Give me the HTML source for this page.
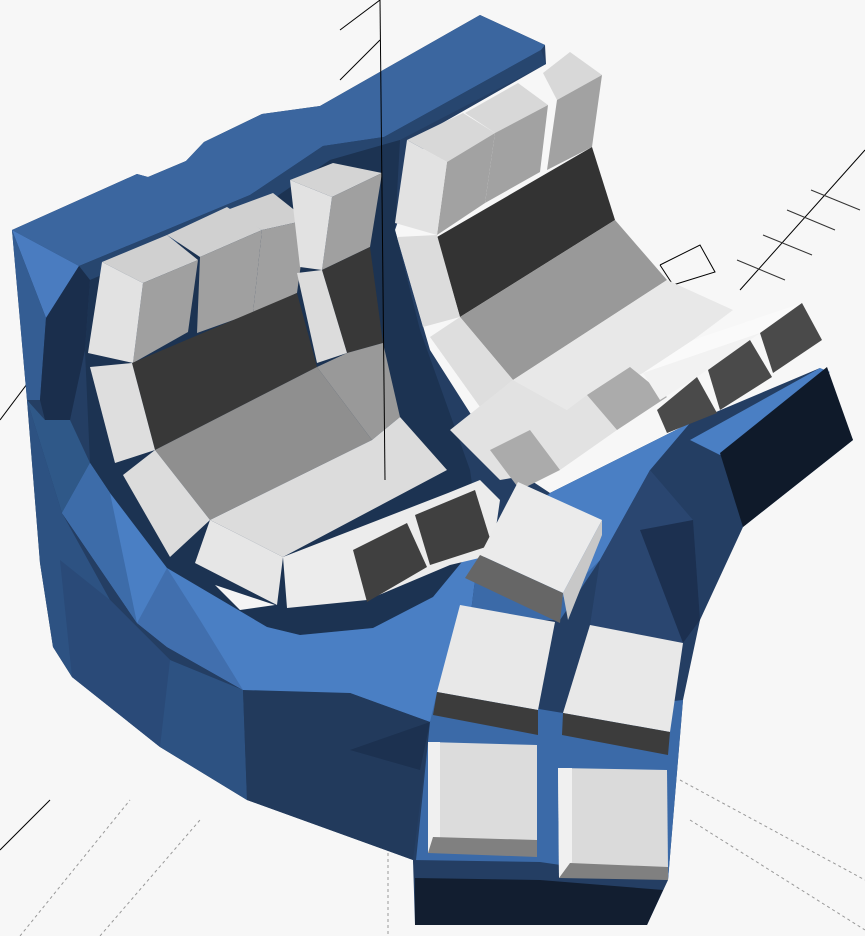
<!DOCTYPE html>
<html><head><meta charset="utf-8"><style>
html,body{margin:0;padding:0;background:#f7f7f7;width:865px;height:936px;overflow:hidden}
svg{display:block}
</style></head><body>
<svg width="865" height="936" viewBox="0 0 865 936" xmlns="http://www.w3.org/2000/svg">
<g stroke="#000" stroke-width="1" fill="none">
<line x1="340" y1="80" x2="380" y2="40"/>
<line x1="340" y1="30" x2="380" y2="0"/>
<line x1="740" y1="290" x2="865" y2="150"/>
<polyline points="660,265 700,245 715,272 673,285 660,265"/>
<line x1="0" y1="850" x2="50" y2="800"/>
<line x1="0" y1="420" x2="30" y2="380"/>
</g>
<g stroke="#333" stroke-width="1" fill="none">
<line x1="787" y1="210" x2="835" y2="230"/>
<line x1="811" y1="190" x2="860" y2="210"/>
<line x1="763" y1="235" x2="812" y2="255"/>
<line x1="737" y1="260" x2="785" y2="280"/>
</g>
<g stroke="#999" stroke-width="1" stroke-dasharray="3,3" fill="none">
<line x1="20" y1="936" x2="130" y2="800"/>
<line x1="100" y1="936" x2="200" y2="820"/>
<line x1="680" y1="780" x2="865" y2="880"/>
<line x1="690" y1="820" x2="865" y2="930"/>
<line x1="388" y1="853" x2="388" y2="936"/>
</g>
<!-- main body base (dark wall) -->
<polygon fill="#243e63" points="12,230 137,174 148,177 186,161 204,142 262,114 320,106 480,15 545,45 546,64 430,130 395,230 430,350 500,460 550,493 690,423 820,368 853,440 743,527 700,620 683,700 668,880 647,925 415,925 413,860 247,800 160,747 72,677 53,647 40,563 27,400"/>
<!-- outer left side -->
<polygon fill="#2d5282" points="27,400 62,513 110,600 170,660 243,690 247,800 160,747 72,677 53,647 40,563"/>
<polygon fill="#2a4a78" points="60,560 110,600 170,660 160,747 72,677"/>
<!-- top wall face -->
<polygon fill="#3b669f" points="12,230 137,174 148,177 186,161 204,142 262,114 320,106 480,15 545,45 541,50 384,137 323,146 250,195 79,266"/>
<polygon fill="#27466f" points="79,266 250,195 323,146 384,137 541,50 546,64 400,140 330,160 260,208 90,280"/>
<polygon fill="#4a7cc0" points="12,230 79,266 46,318"/>
<polygon fill="#345d93" points="12,230 46,318 40,400 27,400"/>
<polygon fill="#1a2e4c" points="46,318 79,266 90,280 85,350 70,420 45,420 40,400"/>
<polygon fill="#2f5888" points="27,400 45,420 70,420 90,463 62,513"/>
<!-- bowl interior -->
<polygon fill="#1c3352" points="90,280 260,208 330,160 400,140 395,230 420,330 470,470 480,540 433,597 373,628 300,635 267,627 167,568 110,493 90,463 85,350"/>
<!-- front rim top face -->
<polygon fill="#4a7fc4" points="62,513 90,463 110,493 167,568 267,627 300,635 373,628 433,597 480,540 470,620 430,722 350,693 273,697 243,690 167,647 137,623"/>
<polygon fill="#3d6ca9" points="62,513 90,463 110,493 137,623"/>
<polygon fill="#416fae" points="167,568 137,623 167,647 243,690 200,620"/>
<!-- lower front dark wall shading -->
<polygon fill="#223a5c" points="243,690 350,693 430,722 413,860 247,800"/>
<polygon fill="#1c3150" points="350,750 430,722 420,770"/>
<!-- right / thumb body -->
<polygon fill="#3b6aa8" points="480,540 550,493 690,423 650,470 600,560 560,620 470,620"/>
<polygon fill="#4a7fc4" points="550,493 690,423 650,470 600,560 560,600 520,560"/>
<polygon fill="#2a4670" points="600,560 650,470 693,520 700,620 683,643 590,625"/>
<polygon fill="#1c3050" points="640,530 693,520 700,620 683,643"/>
<polygon fill="#4a7fc4" points="690,440 820,368 830,372 720,455"/>
<polygon fill="#0f1a2a" points="720,453 827,367 853,440 743,527"/>
<polygon fill="#3b6aa8" points="430,722 437,692 563,713 683,700 668,880 415,870"/>
<polygon fill="#243e63" points="413,860 540,862 663,880 660,890 415,880"/>
<polygon fill="#121e30" points="415,878 540,880 663,890 647,925 415,925"/>
<!-- left cluster -->
<polygon fill="#d0d0d0" points="102,262 167,235 198,260 143,283"/>
<polygon fill="#a0a0a0" points="143,283 198,260 188,332 133,363"/>
<polygon fill="#e2e2e2" points="88,353 102,262 143,283 133,363"/>
<polygon fill="#d0d0d0" points="167,235 227,207 262,230 200,257"/>
<polygon fill="#a0a0a0" points="200,257 262,230 253,313 197,333"/>
<polygon fill="#d0d0d0" points="227,210 273,193 307,220 262,230"/>
<polygon fill="#a0a0a0" points="262,230 307,220 297,293 253,313"/>
<polygon fill="#d4d4d4" points="290,180 333,163 382,173 332,197"/>
<polygon fill="#a0a0a0" points="332,197 382,173 370,247 322,270"/>
<polygon fill="#e2e2e2" points="300,267 290,180 332,197 322,270"/>
<polygon fill="#383838" points="132,363 297,293 317,367 155,450"/>
<polygon fill="#dedede" points="90,367 132,363 155,450 115,463"/>
<polygon fill="#383838" points="322,270 370,247 383,343 347,353"/>
<polygon fill="#dcdcdc" points="297,273 322,270 347,353 317,363"/>
<polygon fill="#8f8f8f" points="155,450 317,367 372,440 210,520"/>
<polygon fill="#dcdcdc" points="123,475 155,450 210,520 170,557"/>
<polygon fill="#999" points="317,367 347,353 383,343 400,417 372,440"/>
<polygon fill="#dcdcdc" points="210,520 372,440 400,417 447,470 283,557"/>
<polygon fill="#e6e6e6" points="195,563 210,520 283,557 277,605"/>
<polygon fill="#ececec" points="283,557 448,493 480,480 500,500 492,555 450,565 367,600 287,608"/>
<polygon fill="#f4f4f4" points="215,585 240,610 275,605"/>
<polygon fill="#404040" points="353,550 407,523 427,567 367,602"/>
<polygon fill="#404040" points="415,515 475,490 492,545 430,565"/>
<!-- right cluster -->
<polygon fill="#d8d8d8" points="543,73 570,52 602,75 557,100"/>
<polygon fill="#a2a2a2" points="557,100 602,75 592,147 547,170"/>
<polygon fill="#d8d8d8" points="465,113 518,83 548,105 495,133"/>
<polygon fill="#a2a2a2" points="495,133 548,105 540,172 485,203"/>
<polygon fill="#d8d8d8" points="407,140 463,113 495,133 447,162"/>
<polygon fill="#a2a2a2" points="447,162 495,133 485,203 437,235"/>
<polygon fill="#e2e2e2" points="395,223 407,140 447,162 437,235"/>
<polygon fill="#333" points="437,237 592,147 615,220 460,317"/>
<polygon fill="#dcdcdc" points="397,237 437,235 460,317 423,327"/>
<polygon fill="#999" points="460,317 615,220 667,280 513,380"/>
<polygon fill="#dedede" points="430,337 460,317 513,380 480,407"/>
<polygon fill="#e8e8e8" points="513,380 667,280 733,310 693,340 643,373 567,410"/>
<polygon fill="#e2e2e2" points="450,430 513,380 567,410 587,395 617,430 560,470 500,480"/>
<polygon fill="#ababab" points="587,395 630,367 667,397 617,430"/>
<polygon fill="#ababab" points="490,450 530,430 560,470 520,490"/>
<polygon fill="#fafafa" points="693,340 802,303 760,333 643,373"/>
<polygon fill="#4a4a4a" points="760,333 802,303 822,340 773,373"/>
<polygon fill="#f2f2f2" points="643,373 760,333 750,340 697,377 660,400"/>
<polygon fill="#4a4a4a" points="708,370 750,340 772,377 720,410"/>
<polygon fill="#4a4a4a" points="657,410 697,377 717,413 667,433"/>
<!-- thumb cluster -->
<polygon fill="#ebebeb" points="518,482 602,520 563,593 480,555"/>
<polygon fill="#c8c8c8" points="602,520 602,535 568,620 563,593"/>
<polygon fill="#666" points="480,555 563,593 560,623 465,578"/>
<polygon fill="#e8e8e8" points="460,605 555,622 538,710 437,692"/>
<polygon fill="#3c3c3c" points="433,715 437,692 538,710 538,735"/>
<polygon fill="#e8e8e8" points="590,625 683,643 670,732 563,713"/>
<polygon fill="#3c3c3c" points="563,713 670,732 668,755 562,735"/>
<polygon fill="#dcdcdc" points="428,742 537,745 537,840 428,853"/>
<polygon fill="#f0f0f0" points="428,742 440,742 440,840 428,853"/>
<polygon fill="#808080" points="428,853 433,837 537,840 537,857"/>
<polygon fill="#dadada" points="558,768 667,770 668,867 559,878"/>
<polygon fill="#f0f0f0" points="558,768 572,768 572,862 559,878"/>
<polygon fill="#808080" points="559,878 570,863 668,867 668,880"/>
<line x1="380" y1="0" x2="385" y2="480" stroke="#000" stroke-width="1"/>
</svg>
</body></html>
